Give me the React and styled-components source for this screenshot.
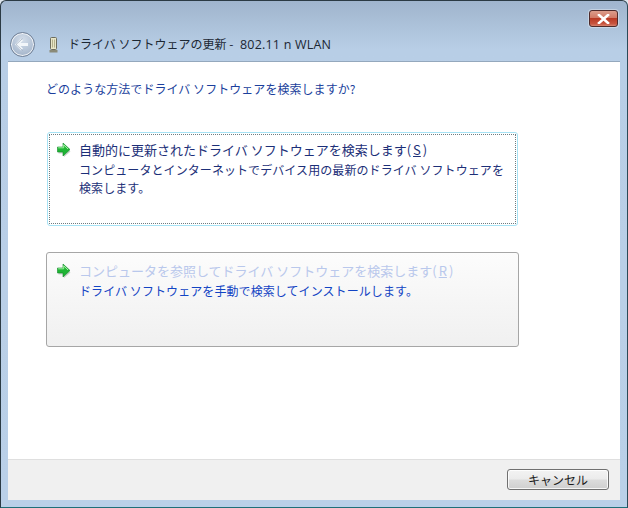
import React from "react";
import styled, { createGlobalStyle } from "styled-components";

const Global = createGlobalStyle`
  html, body { margin: 0; padding: 0; background: #dfe6ee; }
  body { font-family: "Noto Sans CJK JP", "Noto Sans", sans-serif; }
  * { box-sizing: border-box; }
`;

const Win = styled.div`
  width: 628px; height: 508px; display: flex; flex-direction: column;
  border: 1px solid #2b3a44; border-bottom-color: #1f6f78; border-right-color: #2b4a58;
  border-radius: 6px 6px 0 0;
  background: linear-gradient(180deg, #a0b5ce 0, #a6bbd3 12px, #b8cee6 48px, #bad0e8 100%);
  padding: 0 7px 7px; overflow: hidden;
`;
const Caption = styled.div`
  height: 28px; display: flex; justify-content: flex-end; align-items: flex-start;
  padding: 9px 2px 0 0; flex: none;
`;
const CloseBtn = styled.div`
  width: 29px; height: 17px; border: 1px solid #4f2a2a; border-radius: 3px;
  background: linear-gradient(180deg, #dc9d8c 0, #d27a66 45%, #b93a25 50%, #c8553f 85%, #d98470 100%);
  display: flex; align-items: center; justify-content: center;
  box-shadow: 0 0 0 1px rgba(255,255,255,.35);
`;
const Nav = styled.div`
  height: 32px; display: flex; align-items: center; flex: none; position: relative;
`;
const Back = styled.div`
  width: 25px; height: 25px; border-radius: 50%; margin: 0 0 2px 2px; flex: none;
  border: 1px solid #6f7f96;
  background: radial-gradient(circle at 50% 30%, #d4deea 0, #b4c3d6 55%, #98a9c0 100%);
  display: flex; align-items: center; justify-content: center;
  box-shadow: inset 0 0 0 1px rgba(255,255,255,.8);
`;
const DevIcon = styled.svg`
  width: 9px; height: 16px; margin: 0 0 0 14px; flex: none;
`;
const Title = styled.div`
  margin: 0 0 2px 10px; font-size: 12px; color: #1b2733; white-space: pre; line-height: 16px;
  font-family: "Noto Sans CJK JP", sans-serif;
`;
const Latin = styled.span`
  font-family: "Open Sans", "Noto Sans", sans-serif; font-size: 12.5px; letter-spacing: .2px; margin-left: 4px;
`;
const Content = styled.div`
  flex: 1; background: #fff; border-top: 1px solid #94a8bd; display: flex; flex-direction: column;
  min-height: 0;
`;
const Body = styled.div`
  flex: 1; padding: 18px 0 0 38px; display: flex; flex-direction: column; align-items: flex-start;
`;
const Heading = styled.div`
  font-size: 12px; line-height: 18px; color: #1b3f9c; white-space: pre; letter-spacing: .05px;
`;
const Card = styled.div`
  width: ${p => p.$width}px; height: ${p => p.$height}px;
  margin-top: ${p => p.$top}px; margin-left: ${p => p.$left}px;
  border-radius: 3px; position: relative;
  border: 1px solid ${p => (p.$focused ? "#a6e2f4" : "#a6a6a6")};
  background: ${p => (p.$focused ? "#fff" : "linear-gradient(180deg, #fcfcfc 0, #f0f0f0 100%)")};
  padding: ${p => (p.$focused ? "1px" : "0")};
`;
const Inner = styled.div`
  height: 100%; display: flex; gap: 7px;
  padding: ${p => (p.$focused ? "6px 0 0 6px" : "9px 0 0 9px")};
  border: ${p => (p.$focused ? "1px dotted #6f7c80" : "none")};
`;
const Arrow = styled.svg`width: 16px; height: 16px; flex: none; margin-top: 1px;`;
const Texts = styled.div`display: flex; flex-direction: column;`;
const CardTitle = styled.div`
  font-size: 13px; line-height: 18px; white-space: pre;
  color: ${p => (p.$dim ? "#b9c8ec" : "#1c2f78")};
  margin-bottom: 2px;
`;
const CardText = styled.div`
  font-size: 12px; line-height: 18px; white-space: pre; letter-spacing: .08px;
  color: ${p => (p.$vivid ? "#1244c4" : "#1c2f78")};
`;
const Footer = styled.div`
  height: 41px; flex: none; background: #f0f0f0; border-top: 1px solid #dfdfdf;
  display: flex; justify-content: flex-end; padding: 9px 11px 0 0;
`;
const Button = styled.div`
  width: 102px; height: 21px; border: 1px solid #707070; border-radius: 3px;
  background: linear-gradient(180deg, #f3f3f3 0, #ebebeb 48%, #dcdcdc 52%, #cfcfcf 100%);
  box-shadow: inset 0 0 0 1px rgba(255,255,255,.8);
  font-size: 12px; line-height: 19px; text-align: center; color: #1a1a1a;
`;
const Under = styled.span`text-decoration: underline; padding: 0 2px;`;

const GoArrow = () => (
  <Arrow viewBox="0 0 16 16">
    <path d="M2.5 7.5h5.5V4L14.5 9.5 8 15v-3.5H2.5z" fill="#8fa08f" opacity=".45" />
    <path d="M1.5 5h5.5V1L14 7.5 7 14V10H1.5z" fill="#1fb534" stroke="#10862a" strokeWidth=".6" strokeLinejoin="round" />
    <path d="M2.2 5.8h5.5V2.8L12 7" fill="none" stroke="#a2f2a2" strokeWidth="1" />
  </Arrow>
);

export default function App() {
  return (
    <Win>
      <Global />
      <Caption>
        <CloseBtn>
          <svg width="13" height="10" viewBox="0 0 13 10">
            <path d="M2 1l9 8M11 1l-9 8" stroke="#fff" strokeWidth="2.6" strokeLinecap="square" />
          </svg>
        </CloseBtn>
      </Caption>
      <Nav>
        <Back>
          <svg width="15" height="13" viewBox="0 0 15 13">
            <path d="M7 1.5L2 6.5l5 5M2.5 6.5H13" fill="none" stroke="#f2f6fa" strokeWidth="2.8" />
            <path d="M7.4 0.6L1 6.5l6.4 5.9" fill="none" stroke="#8697ad" strokeWidth=".6" />
          </svg>
        </Back>
        <DevIcon viewBox="0 0 9 16">
          <rect x="1.5" y="0.5" width="6" height="12" rx="1" fill="#e8e6c8" stroke="#6d6d5c" />
          <path d="M3.5 2.5v8M5.5 2.5v8" stroke="#b3b08c" />
          <rect x="0.5" y="13" width="8" height="2.5" fill="#8a8a78" />
        </DevIcon>
        <Title>ドライバ ソフトウェアの更新 - <Latin>802.11 n WLAN</Latin></Title>
      </Nav>
      <Content>
        <Body>
          <Heading>どのような方法でドライバ ソフトウェアを検索しますか?</Heading>
          <Card $focused $width={471} $height={94} $top={34} $left={1}>
            <Inner $focused>
              <GoArrow />
              <Texts>
                <CardTitle>自動的に更新されたドライバ ソフトウェアを検索します(<Under>S</Under>)</CardTitle>
                <CardText>コンピュータとインターネットでデバイス用の最新のドライバ ソフトウェアを</CardText>
                <CardText>検索します。</CardText>
              </Texts>
            </Inner>
          </Card>
          <Card $width={473} $height={95} $top={26}>
            <Inner>
              <GoArrow />
              <Texts>
                <CardTitle $dim>コンピュータを参照してドライバ ソフトウェアを検索します(<Under>R</Under>)</CardTitle>
                <CardText $vivid>ドライバ ソフトウェアを手動で検索してインストールします。</CardText>
              </Texts>
            </Inner>
          </Card>
        </Body>
        <Footer>
          <Button>キャンセル</Button>
        </Footer>
      </Content>
    </Win>
  );
}
